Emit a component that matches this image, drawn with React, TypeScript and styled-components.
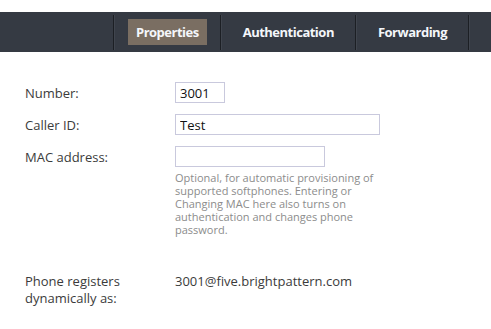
import React from 'react';
import styled, { createGlobalStyle } from 'styled-components';

const GlobalStyle = createGlobalStyle`
  html, body {
    margin: 0;
    padding: 0;
    background: #fff;
    font-family: 'Open Sans', 'Noto Sans', sans-serif;
  }
`;

const tabs = ['Properties', 'Authentication', 'Forwarding'];

const App = () => {
  const active = 'Properties';

  return (
    <>
      <GlobalStyle />
      <Page>
        <TabBar>
          {tabs.map((t) => (
            <React.Fragment key={t}>
              <Separator />
              <Tab $active={t === active}>{t}</Tab>
            </React.Fragment>
          ))}
          <Separator />
        </TabBar>
        <Form>
          <Row>
            <Label>Number:</Label>
            <Field>
              <Input $width={50} defaultValue="3001" />
            </Field>
          </Row>
          <Row>
            <Label>Caller ID:</Label>
            <Field>
              <Input $width={205} defaultValue="Test" />
            </Field>
          </Row>
          <Row>
            <Label>MAC address:</Label>
            <Field>
              <Input $width={150} defaultValue="" />
              <Help>
                Optional, for automatic provisioning of supported softphones. Entering or Changing
                MAC here also turns on authentication and changes phone password.
              </Help>
            </Field>
          </Row>
          <InfoRow>
            <Label>Phone registers dynamically as:</Label>
            <Value>3001@five.brightpattern.com</Value>
          </InfoRow>
        </Form>
      </Page>
    </>
  );
};

const Page = styled.div`
  width: 491px;
  padding-top: 12px;
`;

const TabBar = styled.nav`
  align-items: center;
  background: #353a43;
  display: flex;
  height: 40px;
  justify-content: flex-end;
  padding-right: 21px;
`;

const Separator = styled.span`
  align-self: center;
  background: #1c1f24;
  border-right: 1px solid #40454e;
  height: 35px;
  width: 1px;
`;

const Tab = styled.div<{ $active?: boolean }>`
  background: ${(p) => (p.$active ? '#7a6e62' : 'transparent')};
  color: #f4f6fa;
  font-size: 13px;
  font-weight: 700;
  height: 26px;
  letter-spacing: -0.5px;
  line-height: 26px;
  margin: 0 13px;
  padding: 0 8px;
`;

const Form = styled.div`
  display: flex;
  flex-direction: column;
  padding: 30px 0 0 25px;
`;

const Row = styled.div`
  align-items: flex-start;
  display: grid;
  grid-template-columns: 150px 1fr;
  margin-bottom: 11px;
`;

const InfoRow = styled(Row)`
  margin-top: 23px;
`;

const Label = styled.div`
  color: #3b3b3b;
  font-size: 13px;
  line-height: 17px;
  padding-top: 3px;
  width: 120px;
`;

const Field = styled.div`
  display: flex;
  flex-direction: column;
`;

const Input = styled.input<{ $width: number }>`
  border: 1px solid #c9c9dd;
  box-sizing: border-box;
  color: #111;
  font-family: 'Open Sans', 'Noto Sans', sans-serif;
  font-size: 13px;
  height: 21px;
  margin: 0;
  outline: none;
  padding: 0 4px;
  width: ${(p) => p.$width}px;
`;

const Help = styled.div`
  color: #8c8c8c;
  font-size: 11px;
  line-height: 13px;
  margin-top: 4px;
  width: 210px;
`;

const Value = styled.div`
  color: #3b3b3b;
  font-size: 13px;
  line-height: 17px;
  padding-top: 3px;
`;

export default App;
